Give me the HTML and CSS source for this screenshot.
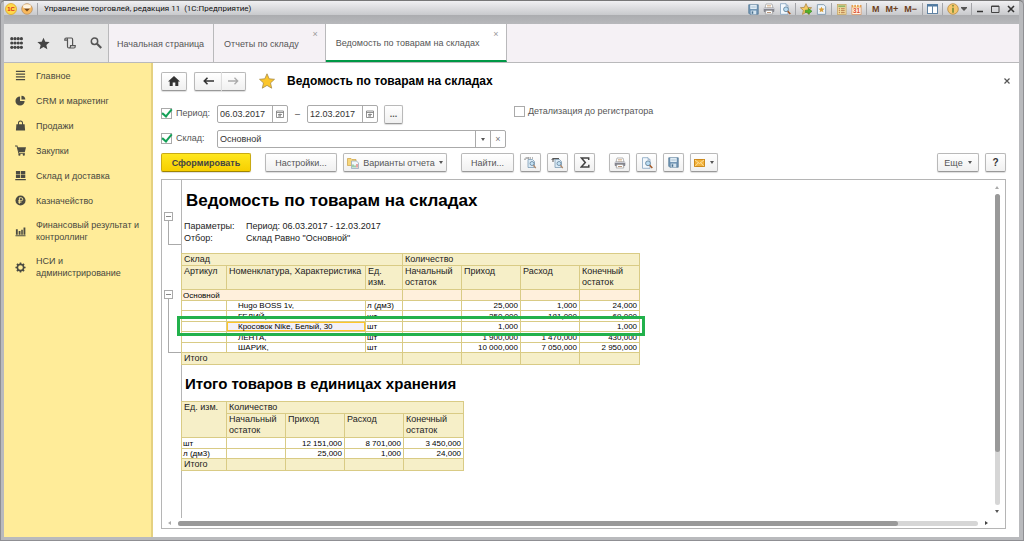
FILE: index.html
```html
<!DOCTYPE html>
<html lang="ru">
<head>
<meta charset="utf-8">
<title>Управление торговлей, редакция 11</title>
<link rel="stylesheet" href="styles.css">
</head>
<body>
<svg class="defs" width="0" height="0" aria-hidden="true">
  <symbol id="i-cal" viewBox="0 0 8 8"><path d="M.5 1h7v6.500h-7zM.5 2.500h7M2 4.500h4M2 6h3M4 3.500v3" fill="none" stroke="#777" stroke-width=".8"/></symbol>
  <symbol id="i-printer" viewBox="0 0 12 12"><path d="M3 1h6l1 4H2z" fill="#fff" stroke="#999" stroke-width=".7"/><path d="M4 2.500h4M4 4h4" stroke="#c79a6b" stroke-width=".6"/><rect x=".7" y="4.700" width="10.600" height="4.500" rx="1.200" fill="#85868f"/><path d="M1 5.500h10" stroke="#c9cad2"/><path d="M3 7.500h6l.8 3.500H2.200z" fill="#fff" stroke="#999" stroke-width=".7"/><path d="M4 9.500h4" stroke="#a77b5a" stroke-width=".8"/></symbol>
  <symbol id="i-preview" viewBox="0 0 12 12"><path d="M1.500.700h5.500l2 2v8.600H1.500z" fill="#f3f8fd" stroke="#86a4c0" stroke-width=".8"/><path d="M7 .7v2h2" fill="none" stroke="#86a4c0" stroke-width=".7"/><circle cx="7" cy="6.300" r="2.400" fill="#b9dcf3" stroke="#64839b" stroke-width=".9"/><path d="M8.700 8.200l2.600 2.900" stroke="#a55a28" stroke-width="1.500"/></symbol>
  <symbol id="i-save" viewBox="0 0 12 12"><path d="M.8.800h10.400v10.400H2L.8 10z" fill="#6f93b3" stroke="#49708f" stroke-width=".7"/><rect x="2.500" y="1" width="7" height="4.500" fill="#e9f3fa"/><path d="M3.500 2.500h5M3.500 4h5" stroke="#9cb6ca" stroke-width=".6"/><rect x="3" y="7.200" width="6" height="4" fill="#d4e3ee"/><rect x="4" y="8" width="1.700" height="2.700" fill="#49708f"/></symbol>
  <symbol id="i-star" viewBox="0 0 16 16"><path d="M8 .8l2.200 5 5.300.5-4 3.600 1.200 5.300L8 12.400l-4.700 2.800 1.200-5.300-4-3.600 5.300-.5z"/></symbol>
</svg>
<div class="window">
  <header class="titlebar">
    <svg class="app-logo" viewBox="0 0 12 12"><circle cx="6" cy="6" r="5.500" fill="#ffd84a" stroke="#d8a21c" stroke-width=".7"/><text x="6" y="8.200" text-anchor="middle" class="logo-text">1С</text></svg>
    <button class="plain" aria-label="Меню"><svg width="12" height="12" viewBox="0 0 12 12"><circle cx="6" cy="6" r="5.300" fill="#f8b85c" stroke="#b99267" stroke-width=".8"/><ellipse cx="6" cy="3.500" rx="4" ry="2.200" fill="#fff2dc"/><path d="M3 5.500h6L6 8.500z" fill="#76471a"/><path d="M3.300 4.800h5.400" stroke="#fff" stroke-width=".6"/></svg></button>
    <span class="sep"></span>
    <span class="title">Управление торговлей, редакция 11 &nbsp;(1С:Предприятие)</span>
    <div class="title-tools">
      <button class="plain" aria-label="Сохранить"><svg width="11" height="11"><use href="#i-save"/></svg></button>
      <button class="plain" aria-label="Печать"><svg width="12" height="12"><use href="#i-printer"/></svg></button>
      <button class="plain" aria-label="Просмотр"><svg width="12" height="12"><use href="#i-preview"/></svg></button>
      <span class="sep"></span>
      <button class="plain" aria-label="В избранное"><svg width="12" height="12" viewBox="0 0 16 16"><use href="#i-star" fill="#f6ca62" stroke="#a88448"/><path d="M7 9.500h4V7l5 4-5 4v-2.500H7z" fill="#50b52c" stroke="#2e7d1b" stroke-width=".7"/></svg></button>
      <button class="plain" aria-label="Избранное"><svg width="11" height="11" viewBox="0 0 12 12"><path d="M1.500.700h7l2 2v8.600h-9z" fill="#eef5fb" stroke="#7f98ae"/><path d="M6 3l1 2 2.200.2-1.700 1.500.6 2.300L6 7.800 3.900 9l.6-2.300-1.700-1.500L5 5z" fill="#d99e3b"/></svg></button>
      <span class="sep"></span>
      <button class="plain" aria-label="Калькулятор"><svg width="11" height="11" viewBox="0 0 12 12"><rect x="1.500" y=".5" width="9.500" height="11" fill="#f5dfa4" stroke="#c3a363" stroke-width=".8"/><rect x="2.500" y="1.500" width="7.500" height="2" fill="#8fb469"/><path d="M3 5.200h1.500M5.500 5.200h4M3 7.300h1.500M5.500 7.300h4M3 9.500h1.500M5.500 9.500h4" stroke="#ad6c3c"/></svg></button>
      <button class="plain" aria-label="Календарь"><svg width="11" height="11" viewBox="0 0 12 12"><rect x="1" y="1.500" width="10" height="10" fill="#fff3e5" stroke="#d5905f" stroke-width=".8"/><path d="M1 2.500h10" stroke="#e7a34d" stroke-width="2.500"/><path d="M3 0v3M6 0v3M9 0v3" stroke="#fff"/><text x="6" y="10.200" text-anchor="middle" class="day">31</text></svg></button>
      <span class="sep"></span>
      <button class="plain mem">M</button><button class="plain mem">M+</button><button class="plain mem">M−</button>
      <span class="sep"></span>
      <button class="plain" aria-label="Панели"><svg width="11" height="10" viewBox="0 0 11 10"><rect x=".5" y=".5" width="10" height="9" fill="#fff" stroke="#6183a3"/><path d="M0 1.500h11" stroke="#4f79a1" stroke-width="2"/><path d="M5.500 1v9" stroke="#6183a3"/></svg></button>
      <span class="sep"></span>
      <button class="plain info" aria-label="Справка"><svg width="12" height="12" viewBox="0 0 12 12"><circle cx="6" cy="6" r="5.300" fill="#f5c66c" stroke="#b78b43" stroke-width=".8"/><path d="M6 2v1.600M6 4.800v5" stroke="#7d8f39" stroke-width="1.700"/></svg><svg width="6" height="4" viewBox="0 0 6 4"><path d="M0 0h6v1L3 4 0 1z" fill="#555"/></svg></button>
      <span class="sep"></span>
      <div class="win-buttons">
        <button class="plain" aria-label="Свернуть"><svg width="8" height="8"><path d="M1 6.500h6" stroke="#333" stroke-width="1.500"/></svg></button>
        <button class="plain" aria-label="Развернуть"><svg width="9" height="8"><path d="M.5 1h7.500v6.500h-7.500zM.5 1.500h7.500" fill="none" stroke="#444"/></svg></button>
        <button class="plain" aria-label="Закрыть"><svg width="8" height="8"><path d="M1 1l6 6M7 1L1 7" stroke="#333" stroke-width="1.600"/></svg></button>
      </div>
    </div>
  </header>

  <nav class="tabs">
    <div class="tab-tools">
      <button class="plain" aria-label="Функции"><svg width="13" height="12" viewBox="0 0 13 12" fill="#444"><g id="dots"><circle cx="1.800" cy="1.700" r="1.600"/><circle cx="5" cy="1.700" r="1.600"/><circle cx="8.200" cy="1.700" r="1.600"/><circle cx="11.400" cy="1.700" r="1.600"/></g><use href="#dots" y="4.300"/><use href="#dots" y="8.600"/></svg></button>
      <button class="plain" aria-label="Избранное"><svg width="13" height="13" fill="#444"><use href="#i-star"/></svg></button>
      <button class="plain" aria-label="История"><svg width="12" height="12" viewBox="0 0 12 12" fill="none" stroke="#555" stroke-width="1.200"><path d="M3 3.200H.8V2.500Q.8 1 2.200 1h5.300Q8.600 1 8.600 2.500v6M2.200 1Q3.500 1 3.500 2.500v7q0 1.500 1.500 1.500h5q1.200 0 1.200-1.500V8.600H6.500v1q0 1.400-1.500 1.400"/></svg></button>
      <button class="plain" aria-label="Поиск"><svg width="12" height="12" viewBox="0 0 12 12" fill="none" stroke="#555"><circle cx="4.500" cy="4.200" r="3.200" stroke-width="1.500"/><path d="M7 6.700l4.200 4.300" stroke-width="2.200"/></svg></button>
    </div>
    <a class="tab" href="#">Начальная страница</a>
    <a class="tab closable" href="#">Отчеты по складу<span class="tab-x">×</span></a>
    <a class="tab closable active" href="#">Ведомость по товарам на складах<span class="tab-x">×</span></a>
  </nav>

  <div class="body">
    <aside class="sidebar">
      <a href="#"><svg viewBox="0 0 12 12"><path d="M1 1.500h10M1 4.500h10M1 7.500h10M1 10.500h10" stroke="#4b4b42" stroke-width="1.500"/></svg>Главное</a>
      <a href="#"><svg viewBox="0 0 12 12"><path d="M5.500 1.500V6.500h5A5 5 0 1 1 5.500 1.500z"/><path d="M7 .8A4.500 4.500 0 0 1 11.300 5H7z"/></svg>CRM и маркетинг</a>
      <a href="#"><svg viewBox="0 0 12 12"><path d="M1.500 4.500h9L11 11.500H1z"/><path d="M3.800 6V3.200a2.200 2.200 0 0 1 4.400 0V6" fill="none" stroke="#4b4b42" stroke-width="1.100"/></svg>Продажи</a>
      <a href="#"><svg viewBox="0 0 12 12"><path d="M2.500 2.500H12L10.700 7.500H4z"/><path d="M0 1h2.200l2 8h6.600" fill="none" stroke="#4b4b42" stroke-width="1.100"/><circle cx="4.800" cy="10.600" r="1.200"/><circle cx="9.600" cy="10.600" r="1.200"/></svg>Закупки</a>
      <a href="#"><svg viewBox="0 0 12 12"><path d="M1 1h4.700v3.500H1zM6.500 1h4.700v3.500H6.500zM1 5.300h4.700v3.500H1zM6.500 5.300h4.700v3.500H6.500zM.3 9.800h11.500v1.400H.3z"/></svg>Склад и доставка</a>
      <a href="#"><svg viewBox="0 0 12 12"><circle cx="6" cy="6" r="5.500"/><path d="M4.800 9.500V3h2a1.600 1.600 0 0 1 0 3.300H3.500M3.500 7.800h3.500" fill="none" stroke="#ffec99"/></svg>Казначейство</a>
      <a href="#"><svg viewBox="0 0 12 12"><path d="M1 3.500h2V9.500H1zM4 5.500h2v4H4zM6.800 4h1.700v5.500H6.800zM9.300 1.500h2v8h-2zM.5 10h11v1.300H.5z"/></svg>Финансовый результат и контроллинг</a>
      <a href="#"><svg viewBox="0 0 12 12" fill="none" stroke="#4b4b42"><circle class="ring" cx="6" cy="6" r="3.400" stroke-width="1.700"/><path d="M6 .5v2M6 9.500v2M.5 6h2M9.500 6h2M2.100 2.100l1.300 1.300M8.600 8.600l1.300 1.300M9.900 2.100L8.600 3.400M3.400 8.600L2.100 9.900" stroke-width="1.700"/></svg>НСИ и администрирование</a>
    </aside>

    <main class="content">
      <div class="head">
        <button class="btn home" aria-label="Домой"><svg width="12" height="10" viewBox="0 0 12 10"><path d="M6 0l6 5.500h-1.700V10H7.300V6.500H4.700V10H1.700V5.500H0z" fill="#333"/></svg></button>
        <div class="pair">
          <button class="btn" aria-label="Назад"><svg width="11" height="8" viewBox="0 0 11 8" fill="none" stroke="#333" stroke-width="1.600"><path d="M11 4H1.500M4.500.800L1.300 4l3.200 3.200"/></svg></button>
          <button class="btn" aria-label="Вперед"><svg width="11" height="8" viewBox="0 0 11 8" fill="none" stroke="#aaa" stroke-width="1.300"><path d="M0 4h9.500M6.500.800L9.700 4 6.500 7.200"/></svg></button>
        </div>
        <svg class="fav" width="16" height="16"><use href="#i-star" fill="#fcc62a" stroke="#a88d4c" stroke-width=".8"/></svg>
        <h1>Ведомость по товарам на складах</h1>
        <button class="plain close" aria-label="Закрыть"><svg width="6" height="6"><path d="M.5.500l5 5M5.500.500l-5 5" stroke="#555" stroke-width="1.200"/></svg></button>
      </div>

      <div class="filter">
        <label class="check lead"><input type="checkbox" checked>Период:</label>
        <span class="field date"><input type="text" value="06.03.2017" aria-label="Начало периода"><button aria-label="Выбрать дату"><svg width="8" height="8"><use href="#i-cal"/></svg></button></span>
        <span class="dash">–</span>
        <span class="field date"><input type="text" value="12.03.2017" aria-label="Конец периода"><button aria-label="Выбрать дату"><svg width="8" height="8"><use href="#i-cal"/></svg></button></span>
        <button class="btn dots">...</button>
        <label class="check detail"><input type="checkbox">Детализация до регистратора</label>
      </div>
      <div class="filter">
        <label class="check lead"><input type="checkbox" checked>Склад:</label>
        <span class="field store"><input type="text" value="Основной" aria-label="Склад"><button aria-label="Выбрать"><i class="caret"></i></button><button class="clear" aria-label="Очистить">×</button></span>
      </div>

      <div class="toolbar">
        <button class="btn primary">Сформировать</button>
        <div class="group"><button class="btn settings">Настройки...</button>
        <button class="btn variants"><svg width="12" height="12" viewBox="0 0 12 12"><path d="M.5 1.500h3.500l1 1h4v6H.5z" fill="#f7d77d" stroke="#cba246" stroke-width=".7"/><path d="M4.500 4h5l2 2v5.500h-7z" fill="#f2f7fb" stroke="#8ba1b5" stroke-width=".7"/><path d="M6 10.500V7.500M8 10.500v-2" stroke="#4aa35a"/><path d="M10 10.500V7" stroke="#d9534a"/></svg>Варианты отчета<i class="caret"></i></button></div>
        <div class="group"><button class="btn find">Найти...</button>
        <button class="btn sq" aria-label="Свернуть группы"><svg width="13" height="12" viewBox="0 0 13 12"><path d="M1 3V1h4M3 1h6" stroke="#777" stroke-dasharray="1.500 1" fill="none"/><path d="M4 2.500h4.500l2 2v6H4z" fill="#dcebf6" stroke="#7f9db5" stroke-width=".8"/><circle cx="8" cy="6.500" r="2" fill="#c5e2f4" stroke="#64839b" stroke-width=".8"/><path d="M9.300 8.300l2.500 2.700" stroke="#b08a6d" stroke-width="1.300"/></svg></button>
        <button class="btn sq" aria-label="Развернуть группы"><svg width="13" height="12" viewBox="0 0 13 12"><path d="M2 5V1.500h6M.7 3L2 1.300 3.300 3" stroke="#555" fill="none"/><path d="M4 2.500h4.500l2 2v6H4z" fill="#dcebf6" stroke="#7f9db5" stroke-width=".8"/><circle cx="8" cy="6.500" r="2" fill="#c5e2f4" stroke="#64839b" stroke-width=".8"/><path d="M9.300 8.300l2.500 2.700" stroke="#b08a6d" stroke-width="1.300"/></svg></button>
        <button class="btn sq" aria-label="Сумма"><svg width="10" height="11" viewBox="0 0 10 11"><path d="M8.700 3V1H1.500L5.300 5.500 1.300 10h7.500V7.800" fill="none" stroke="#444" stroke-width="1.500"/></svg></button></div>
        <div class="group"><button class="btn sq" aria-label="Печать"><svg width="12" height="12"><use href="#i-printer"/></svg></button>
        <button class="btn sq" aria-label="Просмотр"><svg width="12" height="12"><use href="#i-preview"/></svg></button>
        <button class="btn sq" aria-label="Сохранить"><svg width="11" height="11"><use href="#i-save"/></svg></button>
        <button class="btn mail" aria-label="Отправить"><svg width="11" height="8" viewBox="0 0 11 8"><rect x=".5" y=".5" width="10" height="7" fill="#f3b33c" stroke="#cc8a1d"/><path d="M1 1l4.500 3.500L10 1M1 7.300l3.300-3.500M10 7.300L6.700 3.800" fill="none" stroke="#fff0c4" stroke-width=".7"/></svg><i class="caret"></i></button></div>
        <div class="group right"><button class="btn more">Еще<i class="caret"></i></button>
        <button class="btn sq help">?</button></div>
      </div>

      <section class="report">
        <div class="gutter">
          <div class="bracket first"><button aria-label="Свернуть"></button></div>
          <div class="bracket second"><button aria-label="Свернуть"></button></div>
        </div>
        <div class="sheet">
          <h2>Ведомость по товарам на складах</h2>
          <dl class="params"><dt>Параметры:</dt><dd>Период: 06.03.2017 - 12.03.2017</dd><dt>Отбор:</dt><dd>Склад Равно "Основной"</dd></dl>
          <table class="grid main">
            <colgroup><col class="c-art"><col class="c-name"><col class="c-unit"><col class="c-num"><col class="c-num"><col class="c-num"><col class="c-last"></colgroup>
            <thead>
              <tr class="top"><th colspan="3">Склад</th><th colspan="4">Количество</th></tr>
              <tr class="sub"><th>Артикул</th><th>Номенклатура, Характеристика</th><th>Ед. изм.</th><th>Начальный остаток</th><th>Приход</th><th>Расход</th><th>Конечный остаток</th></tr>
            </thead>
            <tbody>
              <tr class="section"><td colspan="3">Основной</td><td></td><td></td><td></td><td></td></tr>
              <tr><td></td><td>Hugo BOSS 1v,</td><td>л (дм3)</td><td></td><td>25,000</td><td>1,000</td><td>24,000</td></tr>
              <tr><td></td><td>ГЕЛИЙ,</td><td>шт</td><td></td><td>250,000</td><td>181,000</td><td>69,000</td></tr>
              <tr class="marked"><td><span class="marker"></span></td><td class="current">Кросовок Nike, Белый, 30</td><td>шт</td><td></td><td>1,000</td><td></td><td>1,000</td></tr>
              <tr><td></td><td>ЛЕНТА,</td><td>шт</td><td></td><td>1 900,000</td><td>1 470,000</td><td>430,000</td></tr>
              <tr><td></td><td>ШАРИК,</td><td>шт</td><td></td><td>10 000,000</td><td>7 050,000</td><td>2 950,000</td></tr>
            </tbody>
            <tfoot><tr><th colspan="3">Итого</th><th></th><th></th><th></th><th></th></tr></tfoot>
          </table>
          <h3>Итого товаров в единицах хранения</h3>
          <table class="grid totals">
            <colgroup><col class="c-art"><col class="c-num"><col class="c-num"><col class="c-num"><col class="c-last"></colgroup>
            <thead>
              <tr class="top"><th rowspan="2">Ед. изм.</th><th colspan="4">Количество</th></tr>
              <tr class="sub"><th>Начальный остаток</th><th>Приход</th><th>Расход</th><th>Конечный остаток</th></tr>
            </thead>
            <tbody>
              <tr><td>шт</td><td></td><td>12 151,000</td><td>8 701,000</td><td>3 450,000</td></tr>
              <tr><td>л (дм3)</td><td></td><td>25,000</td><td>1,000</td><td>24,000</td></tr>
            </tbody>
            <tfoot><tr><th>Итого</th><th></th><th></th><th></th><th></th></tr></tfoot>
          </table>
        </div>
        <div class="vscroll"><i class="arrow up"></i><div class="track"><div class="thumb"></div></div><i class="arrow down"></i></div>
        <div class="hscroll"><i class="arrow left"></i><div class="track"><div class="thumb"></div></div><i class="arrow next"></i></div>
      </section>
    </main>
  </div>
</div>
</body>
</html>
```
FILE: styles.css
```css
* { box-sizing: border-box; }
body { margin: 0; font: 9px/12px "Liberation Sans", Arial, sans-serif; color: #444; background: #a9a9ad; }
button, input { font: inherit; color: inherit; margin: 0; }
a { color: inherit; text-decoration: none; }
svg { display: block; flex: none; }
.defs { position: absolute; }
.plain { border: 0; background: none; padding: 0; display: flex; align-items: center; }

.window { height: 100vh; display: flex; flex-direction: column; padding: 0 4px 3px 3px; border: 1px solid #8f8f93; border-top-color: #777; border-radius: 5px 5px 0 0; background: #b9babd; }
.titlebar { height: 23px; flex: none; display: flex; align-items: flex-start; gap: 4px; padding: 2px 0 0 1px; background: linear-gradient(#f0f0f2, #c9cacd 60%, #acadb0 62%, #b7b8bb); }
.app-logo { width: 12px; height: 12px; }
.logo-text { font: bold 6px "Liberation Sans", sans-serif; fill: #d92a1c; }
.day { font: bold 7px "Liberation Sans", sans-serif; fill: #dc5032; }
.sep { width: 1px; height: 12px; background: #a4a5a9; }
.title { color: #111; font-family: Roboto, "Liberation Sans", sans-serif; font-size: 8px; padding-left: 2px; }
.title-tools { margin-left: auto; display: flex; align-items: center; gap: 4px; height: 12px; }
.mem { color: #6d3f1d; font-weight: bold; padding: 0 1px; }
.info { gap: 2px; }
.win-buttons { display: flex; gap: 7px; padding-right: 4px; }

.tabs { height: 39px; flex: none; display: flex; background: #f5f1f5; border-bottom: 1px solid #b9b9bb; }
.tab-tools { width: 105px; display: flex; align-items: center; gap: 14px; padding-left: 6px; background: #e7e7e7; border-right: 1px solid #b9b9bb; }
.tab { position: relative; display: flex; align-items: center; padding: 2px 9px 0 8px; color: #555; border-right: 1px solid #b9b9bb; }
.closable { padding: 2px 26px 0 10px; }
.tab-x { position: absolute; right: 7px; top: 4px; color: #999; }
.active { background: #fff; border-bottom: 2px solid #009846; }

.body { flex: 1; min-height: 0; display: flex; background: #fff; }
.sidebar { width: 149px; flex: none; background: #ffec99; border-right: 2px solid #e5d180; }
.sidebar a { display: flex; align-items: center; gap: 10px; min-height: 25px; padding: 6px 8px 6px 11px; color: #484840; }
.sidebar svg { width: 11px; height: 11px; fill: #4b4b42; }
.sidebar .ring { fill: #ffec99; }

.content { flex: 1; min-width: 0; display: flex; flex-direction: column; padding: 9px 13px 8px 8px; }
.btn { display: flex; align-items: center; justify-content: center; height: 19px; padding: 0; border: 1px solid #b9b9b9; border-bottom-color: #999; border-radius: 2px; background: linear-gradient(#fff, #f0f0f0); color: #555; box-shadow: 0 1px 1px #ddd; white-space: nowrap; }
.caret { width: 0; height: 0; border: 2px solid transparent; border-top: 3px solid #555; border-bottom: 0; }

.head { display: flex; align-items: center; height: 18px; }
.home { width: 26px; }
.pair { display: flex; margin: 0 13px 0 7px; }
.pair .btn { width: 27px; }
.pair .btn:first-child { border-right: 0; border-radius: 2px 0 0 2px; }
.pair .btn:last-child { border-left-color: #ddd; border-radius: 0 2px 2px 0; width: 25px; }
h1 { margin: 0 0 0 12px; font-size: 12px; line-height: 18px; color: #000; }
.close { margin-left: auto; margin-right: -4px; }

.filter { display: flex; align-items: center; height: 18px; margin-top: 7px; }
.head + .filter { margin-top: 15px; }
.check { display: flex; align-items: center; gap: 4px; color: #555; }
.check input { appearance: none; width: 11px; height: 11px; border: 1px solid #aaa; background: #fff; display: grid; place-items: center; }
.check input:checked::before { content: ""; width: 4px; height: 8px; border: solid #12a056; border-width: 0 2px 2px 0; transform: rotate(40deg); margin-top: -3px; }
.lead { width: 56px; padding-bottom: 2px; }
.field { display: flex; height: 18px; border: 1px solid #aaa; border-radius: 2px; color: #333; }
.field input { flex: 1; min-width: 0; border: 0; padding: 0 2px; background: none; }
.field button { width: 15px; flex: none; border: 0; border-left: 1px solid #aaa; padding: 0; background: none; display: grid; place-items: center; }
.field .clear { color: #777; }
.date { width: 71px; }
.dash { width: 19px; text-align: center; }
.dots { width: 19px; margin-left: 6px; font-weight: bold; }
.detail { margin-left: 111px; padding-bottom: 6px; gap: 3px; }
.store { width: 289px; }

.toolbar { display: flex; gap: 14px; margin-top: 5px; }
.group { display: flex; gap: 6px; }
.right { margin-left: auto; }
.primary { width: 90px; background: linear-gradient(#ffe71f, #f7cf00); border-color: #c9aa14; border-bottom-color: #a08500; color: #444; font-weight: bold; }
.settings { width: 72px; }
.variants { width: 104px; gap: 4px; }
.find { width: 53px; }
.sq { width: 21px; }
.mail { width: 28px; gap: 5px; }
.more { width: 42px; gap: 5px; }
.help { font-weight: bold; color: #333; font-size: 10px; }

.report { flex: 1; min-height: 0; margin-top: 7px; border: 1px solid #b5b5b5; display: grid; grid-template-columns: 20px 1fr 12px; grid-template-rows: 1fr 10px; }
.gutter { border-right: 1px solid #b5b5b5; padding: 32px 0 0 2px; }
.bracket { position: relative; margin-left: 4px; border-left: 1px solid #aaa; border-bottom: 1px solid #aaa; }
.bracket button { position: absolute; left: -5px; top: 0; width: 9px; height: 9px; padding: 0; border: 1px solid #aaa; background: linear-gradient(#888, #888) center / 5px 1px no-repeat #fff; }
.first { height: 33px; }
.second { height: 63px; margin-top: 45px; }
.sheet { color: #222; min-width: 0; }
h2 { margin: 0; padding: 10px 0 0 4px; font-size: 17px; line-height: 21px; color: #000; }
.params { margin: 9px 0; padding-left: 2px; display: grid; grid-template-columns: 62px 1fr; line-height: 12px; }
.params dd { margin: 0; }
h3 { margin: 0; padding: 10px 0 8px 3px; font-size: 15px; line-height: 18px; color: #000; }

.grid { border-collapse: collapse; table-layout: fixed; margin-left: -1px; }
.main { width: 459px; }
.totals { width: 282px; }
.c-art { width: 45px; }
.c-name { width: 139px; }
.c-unit { width: 37px; }
.c-num { width: 59px; }
.c-last { width: 60px; }
.grid th, .grid td { border: 1px solid #d9cb85; padding: 0 2px; }
.grid th { background: #f6efc8; font-weight: normal; text-align: left; vertical-align: top; line-height: 11px; height: 12px; }
.grid .sub th { height: 24px; }
.grid td { font-size: 8px; line-height: 9px; height: 11px; color: #000; text-align: right; white-space: nowrap; }
.grid tbody tr:nth-child(even) td { height: 10px; }
.grid td:first-child { text-align: left; padding-left: 1px; }
.main td:nth-child(2) { text-align: left; padding-left: 11px; }
.main td:nth-child(3) { text-align: left; padding-left: 1px; }
.grid .section td { background: #fff0dc; }
.marked { position: relative; }
.marker { position: absolute; inset: -6px -5px -4px -5px; border: 3px solid #22b14c; }
.grid .current { background: #f3f0f7; box-shadow: inset 0 0 0 1px #ffc629; }

.track { background: #d6d6d6; border-radius: 3px; flex: 1; display: flex; }
.thumb { background: #999; border-radius: 3px; }
.vscroll { display: flex; flex-direction: column; align-items: center; gap: 5px; padding: 6px 4px 5px 0; }
.vscroll .track { width: 5px; flex-direction: column; }
.vscroll .thumb { height: 83%; }
.hscroll { grid-column: 1 / -1; display: flex; align-items: center; gap: 7px; padding: 0 17px 0 6px; }
.hscroll .track { height: 5px; }
.hscroll .thumb { width: 90%; }
.arrow { width: 0; height: 0; border: 2px solid transparent; }
.up { border-bottom: 3px solid #aaa; border-top: 0; }
.down { border-top: 3px solid #555; border-bottom: 0; }
.left { border-right: 3px solid #aaa; border-left: 0; }
.next { border-left: 3px solid #444; border-right: 0; }
```
